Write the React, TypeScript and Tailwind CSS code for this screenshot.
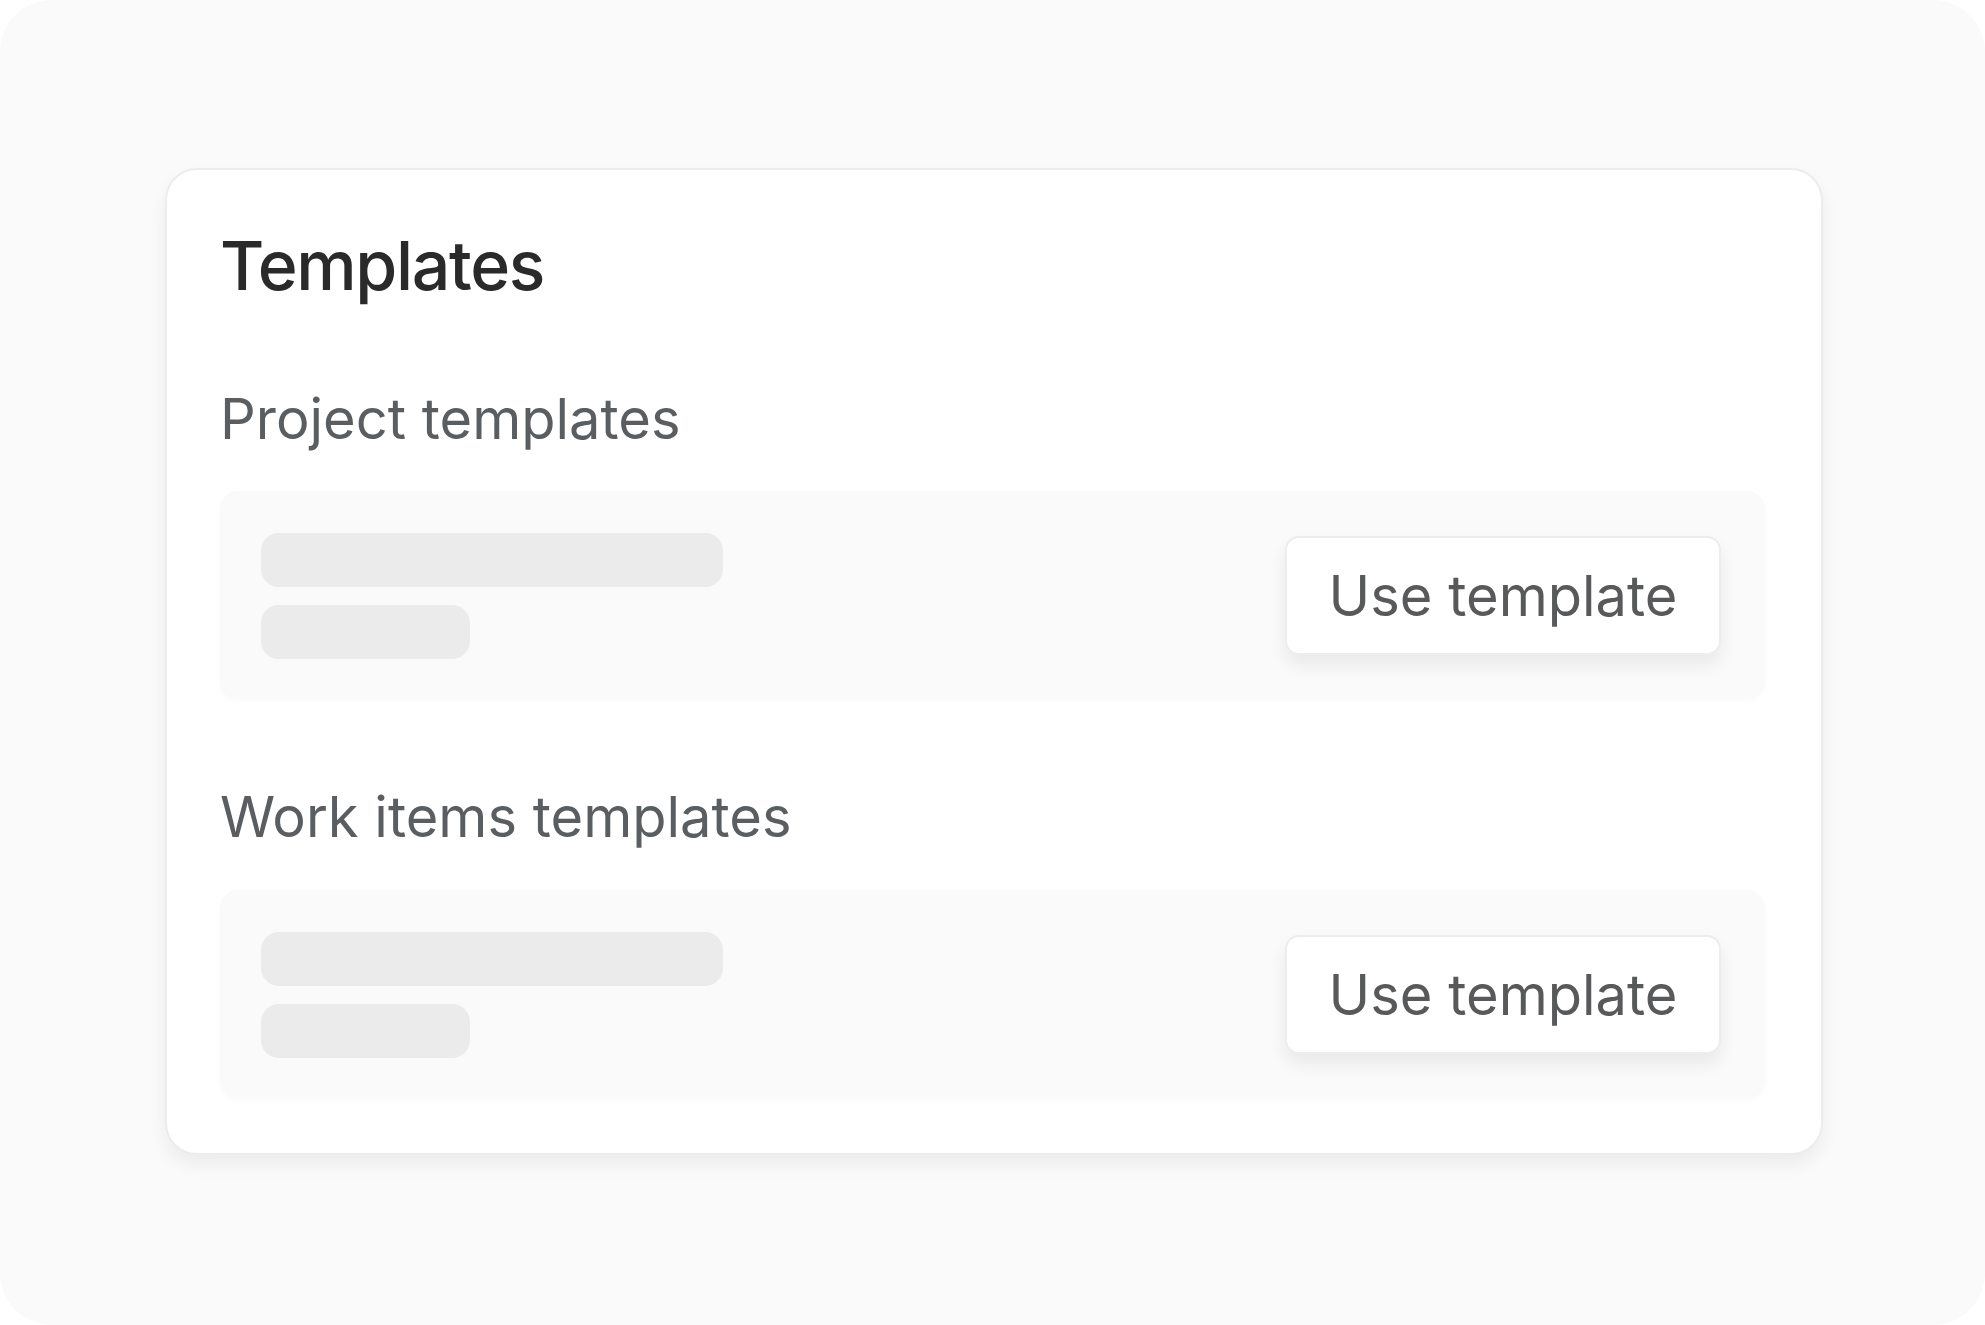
const font = { fontFamily: '"Inter", "Noto Sans", sans-serif' };

const TemplateRow = () => {
    return (
        <div className="flex items-center justify-between h-[209px] rounded-[18px] bg-[#fafafa] pl-[41px] pr-[44px] shadow-[0_2px_6px_rgba(0,0,0,0.02)]">
            {/* skeleton lines */}
            <div className="flex flex-col gap-[18px]">
                <div className="w-[462px] h-[54px] rounded-[18px] bg-[#ebebeb]" />
                <div className="w-[209px] h-[54px] rounded-[18px] bg-[#ebebeb]" />
            </div>
            <button className="w-[436px] h-[119px] rounded-[14px] bg-white border-2 border-[#ededed] shadow-[0_10px_18px_rgba(0,0,0,0.07)] text-[56px] text-[#58595b]">
                Use template
            </button>
        </div>
    );
};

export default function App() {
    return (
        <div className="bg-white w-[1985px] h-[1325px]" style={font}>
            <div className="w-full h-full rounded-[52px] bg-[#fafafa] pt-[168px] pl-[165px] pr-[162px]">
                <div className="h-[987px] rounded-[32px] bg-white border-2 border-[#ececec] shadow-[0_10px_18px_rgba(0,0,0,0.06)] pl-[53px] pr-[56px] pt-[55px] pb-[54px] flex flex-col">
                    <h1 className="text-[68px] leading-[80px] font-medium tracking-[-0.02em] text-[#2a2a2a]">Templates</h1>

                    <h2 className="mt-[82px] text-[56px] leading-[64px] text-[#5b5e61]">Project templates</h2>
                    <div className="mt-[40px]">
                        <TemplateRow />
                    </div>

                    <h2 className="mt-[85px] text-[56px] leading-[64px] text-[#5b5e61]">Work items templates</h2>
                    <div className="mt-[41px]">
                        <TemplateRow />
                    </div>
                </div>
            </div>
        </div>
    );
}
